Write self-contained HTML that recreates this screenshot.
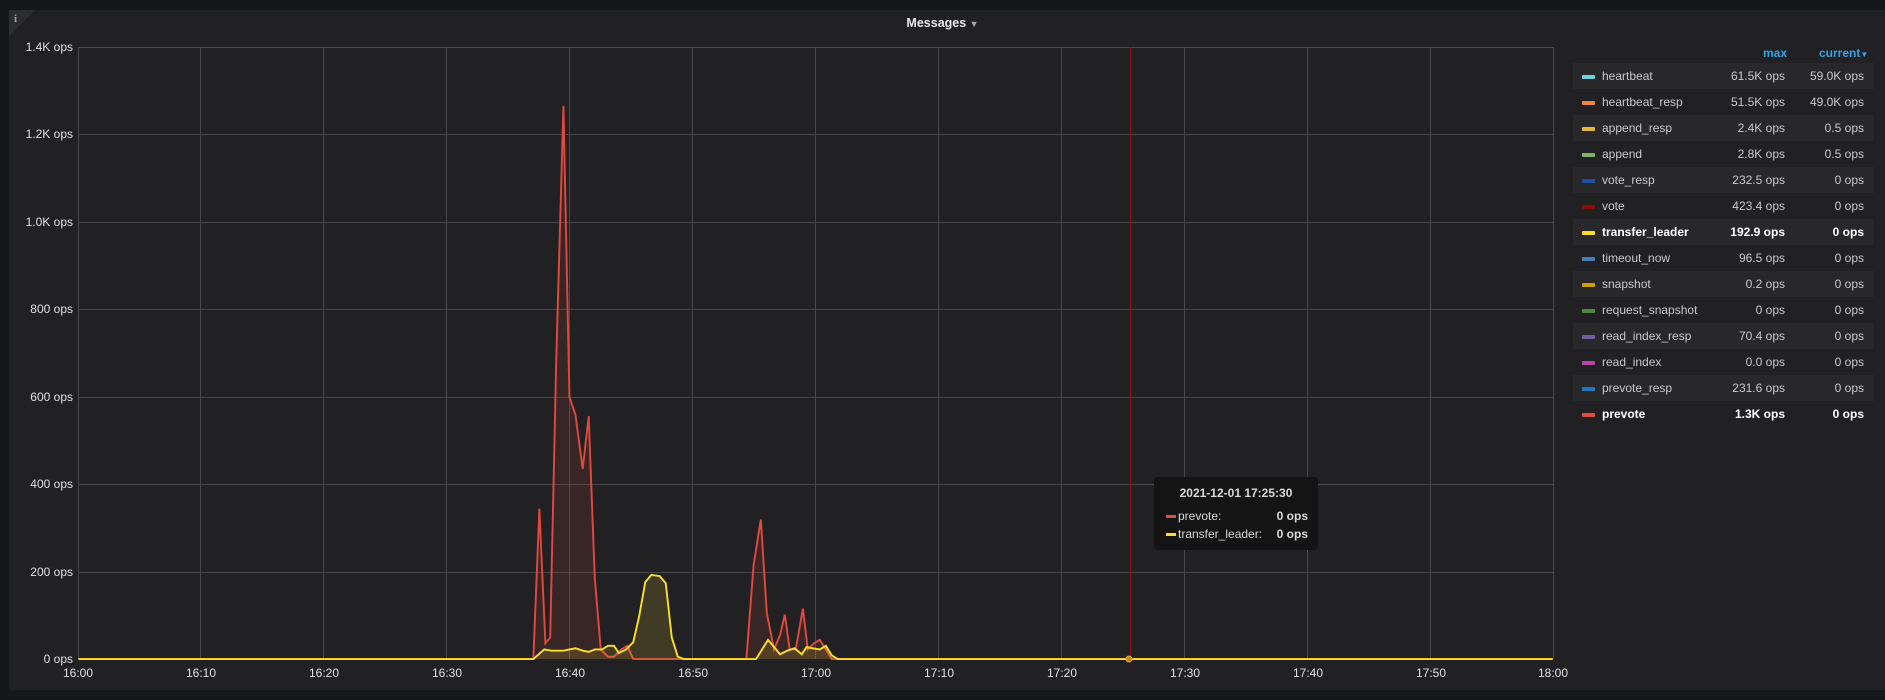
<!DOCTYPE html>
<html><head><meta charset="utf-8"><style>
html,body{margin:0;padding:0;background:#161719;width:1885px;height:700px;overflow:hidden;font-family:"Liberation Sans",sans-serif;}
.panel{position:absolute;left:9px;top:10px;width:1876px;height:680px;background:#212124;}
.title{position:absolute;left:0;width:1885px;top:16px;text-align:center;color:#e8e8e8;font-size:12.5px;font-weight:bold;}
.yl{position:absolute;right:1812px;color:#e0e0e0;font-size:12px;white-space:nowrap;}
.xl{position:absolute;top:666px;color:#e0e0e0;font-size:12px;width:60px;margin-left:-30px;text-align:center;}
.lg{position:absolute;left:1573px;width:301px;height:26px;font-size:12px;color:#c8c8c8;}
.lg.alt{background:#28282b;}
.lg .sw{position:absolute;left:9px;top:12px;width:13px;height:4px;border-radius:1px;}
.lg .n{position:absolute;left:29px;top:6px;}
.lg .m{position:absolute;right:89px;top:6px;}
.lg .c{position:absolute;right:10px;top:6px;}
.lg.b{color:#fff;font-weight:bold;}
.hd{position:absolute;top:46px;color:#33a2e5;font-size:12px;font-weight:bold;}
.tt{position:absolute;left:1154px;top:477px;width:164px;height:73px;background:#141414;border-radius:4px;color:#d8d9da;font-size:12px;}
</style></head><body>
<div class="panel"></div>
<svg style="position:absolute;left:9px;top:10px" width="30" height="30"><polygon points="0,0 26,0 0,26" fill="#2d2d30"/><text x="5" y="12" fill="#9fa0a5" font-size="11" font-weight="bold" font-family="Liberation Serif">i</text></svg>
<div class="title">Messages <span style="font-size:9px;color:#aaa">▼</span></div>
<svg style="position:absolute;left:0;top:0" width="1885" height="700">
<g stroke="#48484c" stroke-width="1">
<line x1="78" y1="47.5" x2="1553" y2="47.5"/><line x1="78" y1="134.5" x2="1553" y2="134.5"/><line x1="78" y1="222.5" x2="1553" y2="222.5"/><line x1="78" y1="309.5" x2="1553" y2="309.5"/><line x1="78" y1="397.5" x2="1553" y2="397.5"/><line x1="78" y1="484.5" x2="1553" y2="484.5"/><line x1="78" y1="572.5" x2="1553" y2="572.5"/>
<line x1="78.5" y1="47" x2="78.5" y2="659"/><line x1="200.5" y1="47" x2="200.5" y2="659"/><line x1="323.5" y1="47" x2="323.5" y2="659"/><line x1="446.5" y1="47" x2="446.5" y2="659"/><line x1="569.5" y1="47" x2="569.5" y2="659"/><line x1="692.5" y1="47" x2="692.5" y2="659"/><line x1="815.5" y1="47" x2="815.5" y2="659"/><line x1="938.5" y1="47" x2="938.5" y2="659"/><line x1="1061.5" y1="47" x2="1061.5" y2="659"/><line x1="1184.5" y1="47" x2="1184.5" y2="659"/><line x1="1307.5" y1="47" x2="1307.5" y2="659"/><line x1="1430.5" y1="47" x2="1430.5" y2="659"/><line x1="1553.5" y1="47" x2="1553.5" y2="659"/>
</g>
<g transform="translate(0.2,0) scale(1.2035,1.2027)">
<path d="M65,548 L443,548 L448,423 L453,535 L457,530 L462,300 L468,88 L473,330 L478,345 L484,390 L489,346 L494,480 L499,540 L505,546 L510,546 L516,540 L521,537 L526,548 L620,548 L626,470 L632,432 L637,510 L643,540 L648,528 L652,511 L656,540 L661,540 L667,506 L671,540 L676,535 L681,532 L686,540 L691,548 L1290,548" fill="rgba(224,75,60,0.12)" stroke="#e0493c" stroke-width="1.6"/>
<path d="M65,548 L443,548 L452,540 L458,541 L468,541 L473,540 L478,539 L484,541 L489,542 L494,540 L500,540 L505,537 L510,537 L514,543 L520,540 L526,534 L531,512 L536,484 L541,478 L548,479 L553,485 L558,530 L563,546 L568,548 L628,548 L633,540 L638,532 L643,538 L648,544 L654,541 L660,539 L666,544 L670,538 L675,539 L681,540 L686,537 L691,545 L696,548 L1290,548" fill="rgba(250,222,42,0.14)" stroke="#fade2a" stroke-width="1.6"/>
</g>
<line x1="1130.5" y1="47" x2="1130.5" y2="659" stroke="#8b0f0f" stroke-width="1"/>
<circle cx="1129" cy="659" r="3" fill="#c98a1a" stroke="#e6a33b"/>
</svg>
<div class="yl" style="top:40px">1.4K ops</div><div class="yl" style="top:127px">1.2K ops</div><div class="yl" style="top:215px">1.0K ops</div><div class="yl" style="top:302px">800 ops</div><div class="yl" style="top:390px">600 ops</div><div class="yl" style="top:477px">400 ops</div><div class="yl" style="top:565px">200 ops</div><div class="yl" style="top:652px">0 ops</div>
<div class="xl" style="left:78px">16:00</div><div class="xl" style="left:201px">16:10</div><div class="xl" style="left:324px">16:20</div><div class="xl" style="left:447px">16:30</div><div class="xl" style="left:570px">16:40</div><div class="xl" style="left:693px">16:50</div><div class="xl" style="left:816px">17:00</div><div class="xl" style="left:939px">17:10</div><div class="xl" style="left:1062px">17:20</div><div class="xl" style="left:1185px">17:30</div><div class="xl" style="left:1308px">17:40</div><div class="xl" style="left:1431px">17:50</div><div class="xl" style="left:1553px">18:00</div>
<div class="hd" style="left:1763px">max</div><div class="hd" style="left:1819px">current<span style="font-size:8px">▼</span></div>
<div class="lg alt" style="top:63px"><div class="sw" style="background:#6ed0e0"></div><div class="n">heartbeat</div><div class="m">61.5K ops</div><div class="c">59.0K ops</div></div>
<div class="lg" style="top:89px"><div class="sw" style="background:#ef843c"></div><div class="n">heartbeat_resp</div><div class="m">51.5K ops</div><div class="c">49.0K ops</div></div>
<div class="lg alt" style="top:115px"><div class="sw" style="background:#eab839"></div><div class="n">append_resp</div><div class="m">2.4K ops</div><div class="c">0.5 ops</div></div>
<div class="lg" style="top:141px"><div class="sw" style="background:#7eb26d"></div><div class="n">append</div><div class="m">2.8K ops</div><div class="c">0.5 ops</div></div>
<div class="lg alt" style="top:167px"><div class="sw" style="background:#1f4fa8"></div><div class="n">vote_resp</div><div class="m">232.5 ops</div><div class="c">0 ops</div></div>
<div class="lg" style="top:193px"><div class="sw" style="background:#890f02"></div><div class="n">vote</div><div class="m">423.4 ops</div><div class="c">0 ops</div></div>
<div class="lg alt b" style="top:219px"><div class="sw" style="background:#fade2a"></div><div class="n">transfer_leader</div><div class="m">192.9 ops</div><div class="c">0 ops</div></div>
<div class="lg" style="top:245px"><div class="sw" style="background:#447ebc"></div><div class="n">timeout_now</div><div class="m">96.5 ops</div><div class="c">0 ops</div></div>
<div class="lg alt" style="top:271px"><div class="sw" style="background:#c8a200"></div><div class="n">snapshot</div><div class="m">0.2 ops</div><div class="c">0 ops</div></div>
<div class="lg" style="top:297px"><div class="sw" style="background:#508642"></div><div class="n">request_snapshot</div><div class="m">0 ops</div><div class="c">0 ops</div></div>
<div class="lg alt" style="top:323px"><div class="sw" style="background:#705da0"></div><div class="n">read_index_resp</div><div class="m">70.4 ops</div><div class="c">0 ops</div></div>
<div class="lg" style="top:349px"><div class="sw" style="background:#ba43a9"></div><div class="n">read_index</div><div class="m">0.0 ops</div><div class="c">0 ops</div></div>
<div class="lg alt" style="top:375px"><div class="sw" style="background:#1f78c1"></div><div class="n">prevote_resp</div><div class="m">231.6 ops</div><div class="c">0 ops</div></div>
<div class="lg b" style="top:401px"><div class="sw" style="background:#e24d42"></div><div class="n">prevote</div><div class="m">1.3K ops</div><div class="c">0 ops</div></div>
<div class="tt">
<div style="position:absolute;left:0;width:164px;top:9px;text-align:center;font-weight:bold">2021-12-01 17:25:30</div>
<div style="position:absolute;left:12px;top:32px;width:10px;height:3px;background:#e24d42;margin-top:6px"></div>
<div style="position:absolute;left:24px;top:32px">prevote:</div><div style="position:absolute;right:10px;top:32px;font-weight:bold">0 ops</div>
<div style="position:absolute;left:12px;top:50px;width:10px;height:3px;background:#fade2a;margin-top:6px"></div>
<div style="position:absolute;left:24px;top:50px">transfer_leader:</div><div style="position:absolute;right:10px;top:50px;font-weight:bold">0 ops</div>
</div>
</body></html>
